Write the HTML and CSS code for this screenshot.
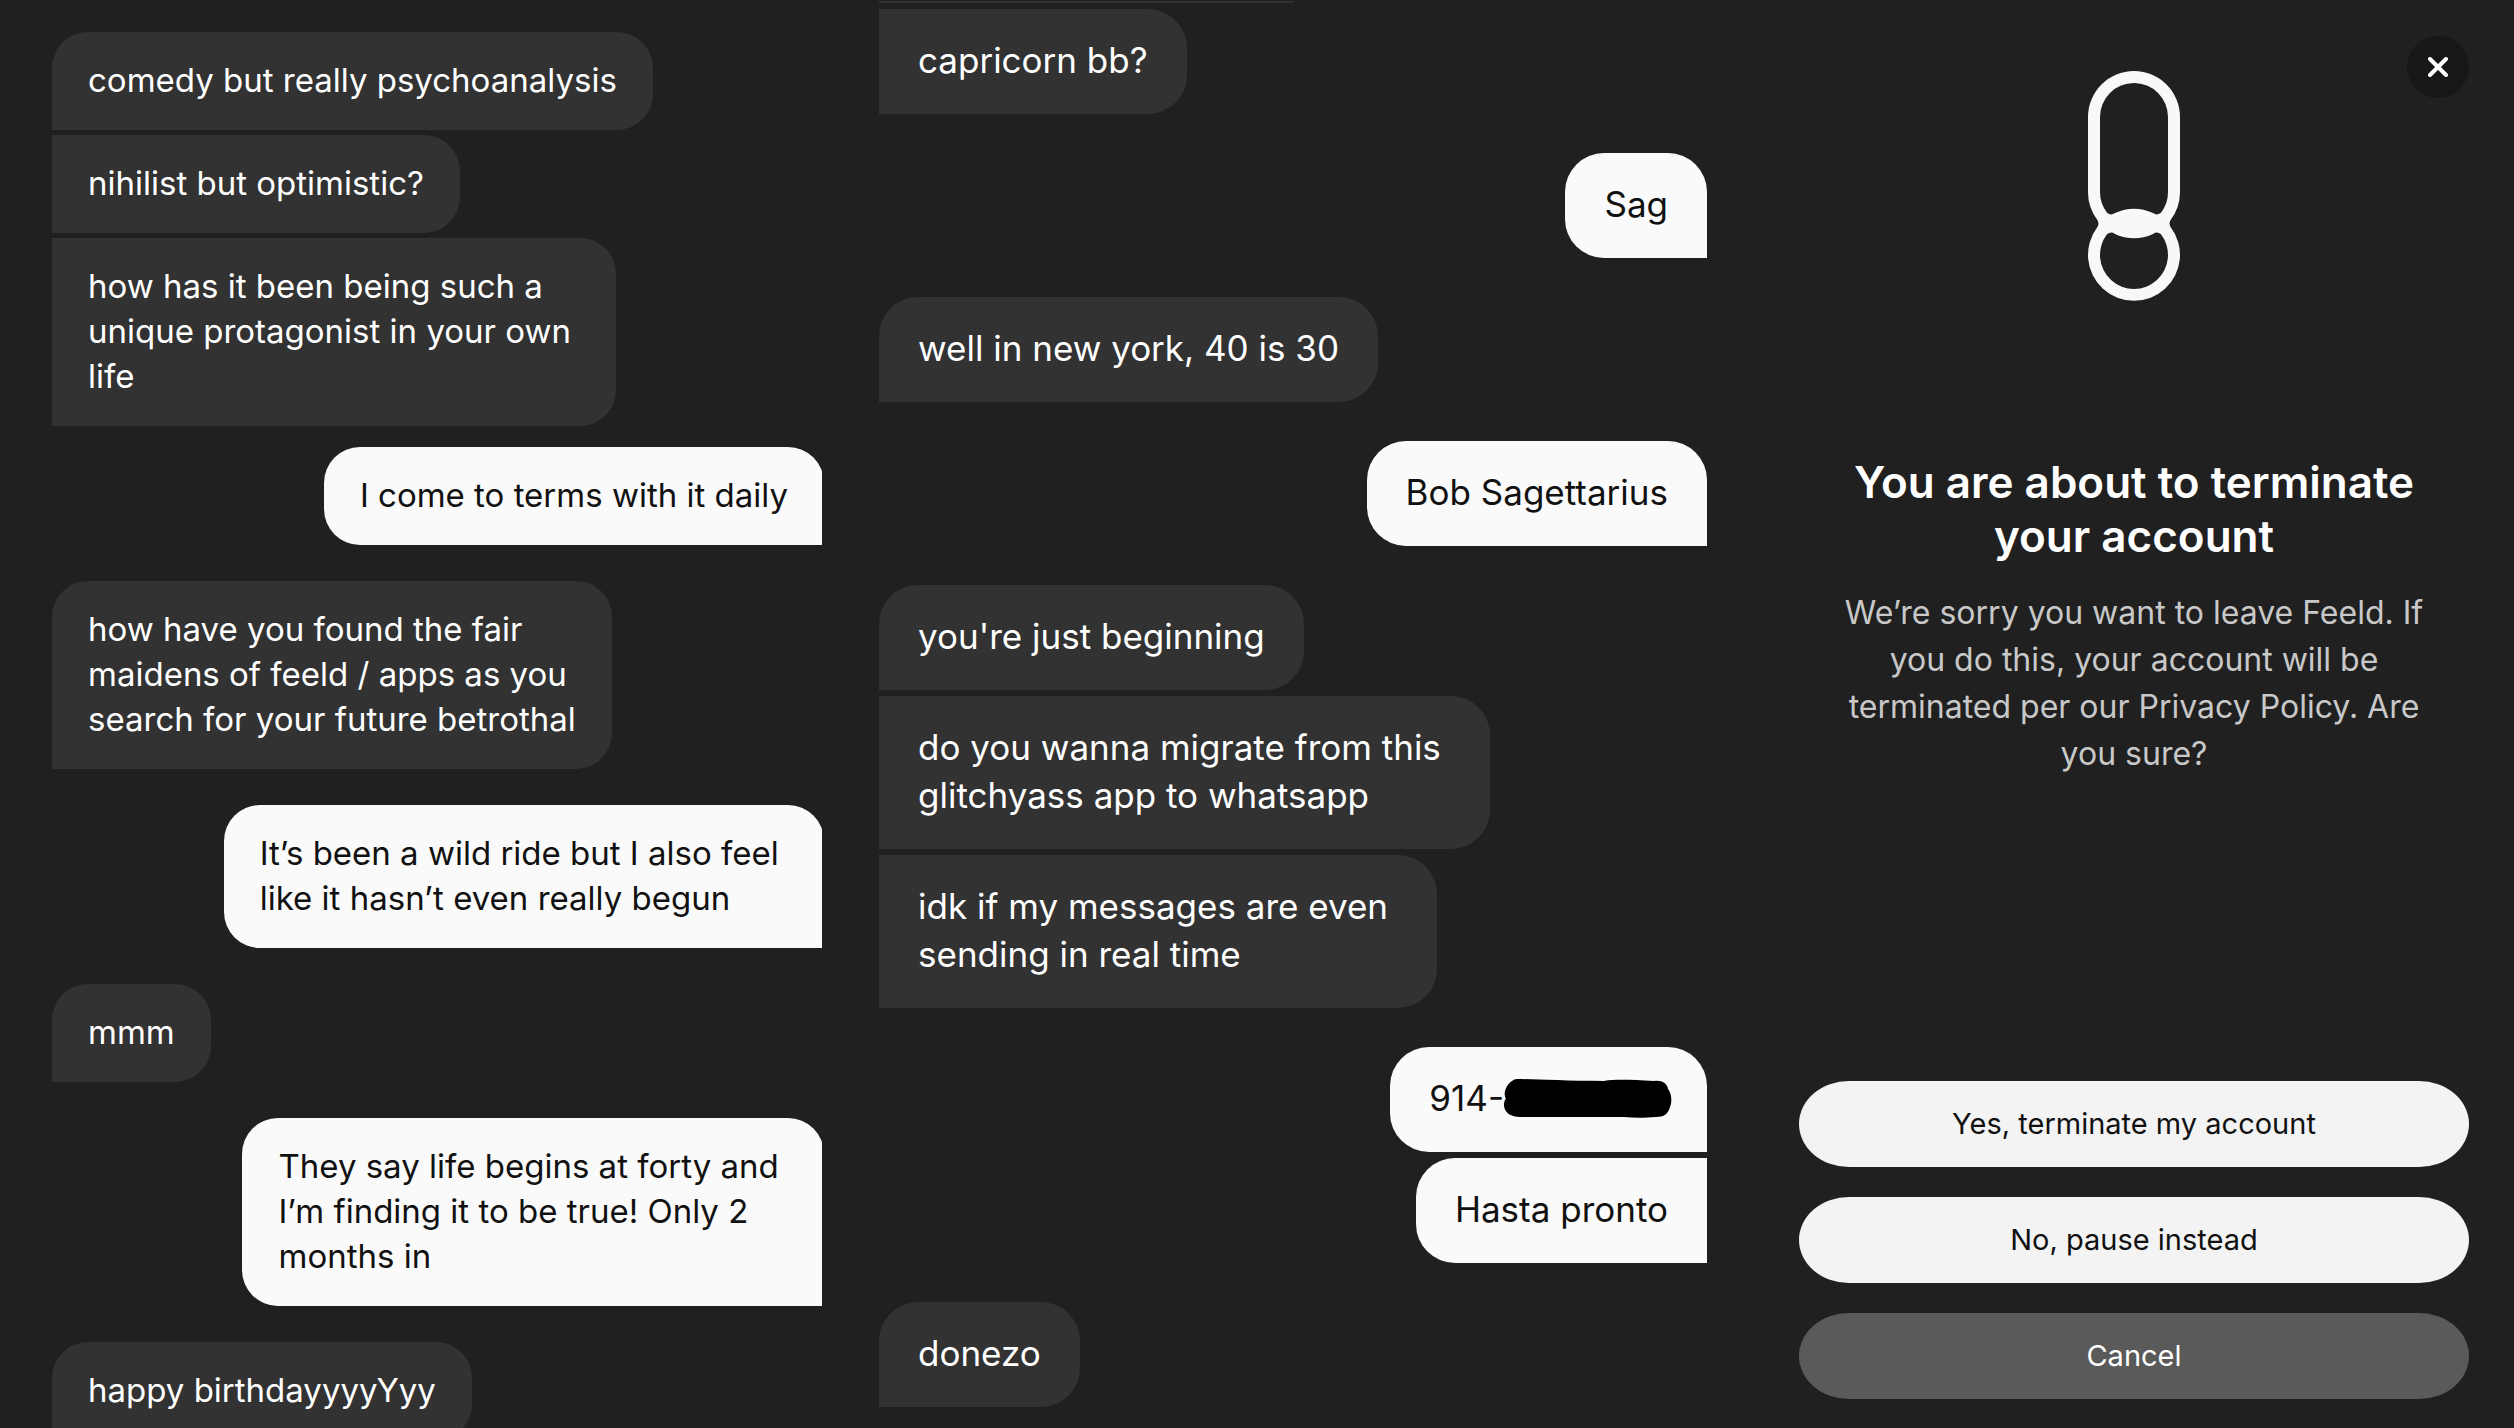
FILE: index.html
```html
<!DOCTYPE html>
<html lang="en">
<head>
<meta charset="utf-8">
<title>Feeld</title>
<link rel="stylesheet" href="styles.css">
</head>
<body>
<main class="board">
  <section class="panel panel-first" aria-label="First conversation">
    <ol class="thread thread-small">
      <li class="bubble in">comedy but really psychoanalysis</li>
      <li class="bubble in joined">nihilist but optimistic?</li>
      <li class="bubble in joined">how has it been being such a 
unique protagonist in your own 
life</li>
      <li class="bubble out close-up">I come to terms with it daily</li>
      <li class="bubble in">how have you found the fair 
maidens of feeld / apps as you 
search for your future betrothal</li>
      <li class="bubble out">It’s been a wild ride but I also feel 
like it hasn’t even really begun</li>
      <li class="bubble in">mmm</li>
      <li class="bubble out">They say life begins at forty and 
I’m finding it to be true! Only 2 
months in</li>
      <li class="bubble in">happy birthdayyyyYyy</li>
    </ol>
  </section>

  <section class="panel panel-second" aria-label="Second conversation">
    <ol class="thread thread-large">
      <li class="bubble in cut-off" aria-hidden="true"></li>
      <li class="bubble in joined">capricorn bb?</li>
      <li class="bubble out">Sag</li>
      <li class="bubble in">well in new york, 40 is 30</li>
      <li class="bubble out">Bob Sagettarius</li>
      <li class="bubble in">you're just beginning</li>
      <li class="bubble in joined">do you wanna migrate from this 
glitchyass app to whatsapp</li>
      <li class="bubble in joined">idk if my messages are even 
sending in real time</li>
      <li class="bubble out phone">914-<svg class="redaction" viewBox="0 0 168 39" role="img" aria-label="redacted"><path d="M13 0C30 0 60 2 100 2C112 0 128 1 150 2C158 1 163 4 164 10C168 15 168 23 166 28C164 35 160 38 152 38C140 39 130 39 120 38H16C6 38 0 33 0 26Q0 21 2 20Q0 17 1 12Q3 5 8 2Q10 0 13 0Z"/></svg></li>
      <li class="bubble out joined">Hasta pronto</li>
      <li class="bubble in">donezo</li>
    </ol>
  </section>

  <section class="panel dialog" role="dialog" aria-labelledby="dialog-title">
    <button class="close" type="button" aria-label="Close">
      <svg viewBox="0 0 20 20" width="20" height="20"><path d="M2 2L18 18M18 2L2 18"/></svg>
    </button>
    <svg class="logo" viewBox="0 0 92 230" aria-hidden="true">
      <path fill-rule="evenodd" d="M46 0A46 46 0 0 1 92 46V121A46 46 0 0 1 82.6 149Q80.5 152.5 82.6 156A46 46 0 1 1 9.4 156Q11.5 152.5 9.4 149A46 46 0 0 1 0 121V46A46 46 0 0 1 46 0ZM12 46A34 34 0 0 1 80 46V121A34 34 0 0 1 73 141.7Q69 145 65 142.1A46 46 0 0 0 27 142.1Q23 145 19 141.7A34 34 0 0 1 12 121ZM19 163.3Q23 160 27 162.9A46 46 0 0 0 65 162.9Q69 160 73 163.3A34 34 0 1 1 19 163.3Z"/>
    </svg>
    <h1 class="title" id="dialog-title">You are about to terminate your account</h1>
    <p class="text">We’re sorry you want to leave Feeld. If you do this, your account will be terminated per our Privacy Policy. Are you sure?</p>
    <div class="actions">
      <button class="action" type="button">Yes, terminate my account</button>
      <button class="action" type="button">No, pause instead</button>
      <button class="action action-quiet" type="button">Cancel</button>
    </div>
  </section>
</main>
</body>
</html>
```
FILE: styles.css
```css
* {
  box-sizing: border-box;
}

body {
  margin: 0;
  background: #202020;
  color: #fff;
  font-family: Inter, "Liberation Sans", sans-serif;
}

.board {
  display: grid;
  grid-template-columns: 850fr 880fr 784fr;
  height: 100vh;
  overflow: hidden;
}

.panel {
  min-width: 0;
  min-height: 0;
}

.panel-first {
  padding: 32px 28px 0 52px;
}

.panel-second {
  padding: 0 23px 0 29px;
}

/* Conversations */

.thread {
  display: flex;
  flex-direction: column;
  margin: 0;
  padding: 0;
  list-style: none;
}

.thread-small {
  --gap: 36px;
  --joined-gap: 5px;
  --radius: 36px;
  overflow: hidden;
  font-size: 33px;
  line-height: 45px;
}

.thread-large {
  --gap: 39px;
  --joined-gap: 6px;
  --radius: 39px;
  font-size: 35px;
  line-height: 48px;
}

.bubble {
  flex: none;
  max-width: 100%;
  margin-top: var(--gap);
  border-radius: var(--radius);
  white-space: break-spaces;
}

.bubble:first-child {
  margin-top: 0;
}

.thread-small .bubble {
  padding: 26px 36px 27px;
}

.thread-large .bubble {
  padding: 27px 39px 30px;
}

.in {
  align-self: flex-start;
  background: #323232;
  border-bottom-left-radius: 0;
}

.out {
  align-self: flex-end;
  background: #fafafa;
  border-bottom-right-radius: 0;
  color: #111;
}

.bubble.joined {
  margin-top: var(--joined-gap);
}

.in.joined {
  border-top-left-radius: 0;
}

.out.joined {
  border-top-right-radius: 0;
}

.bubble.close-up {
  margin-top: 21px;
}

/* Sent bubbles run slightly past the edge of the first thread */
.thread-small .out {
  margin-right: -2px;
}

.thread-large .cut-off {
  width: 416px;
  height: 3px;
  padding: 0;
  border-top: 1px solid #202020;
  border-radius: 0 0 12px 0;
}

.phone {
  display: flex;
  align-items: center;
}

.redaction {
  width: 168px;
  height: 39px;
  margin-right: -4px;
  fill: #000;
}

/* Account dialog */

.dialog {
  position: relative;
  display: flex;
  flex-direction: column;
  align-items: center;
  padding: 71px 45px 29px 69px;
  text-align: center;
}

.close {
  position: absolute;
  top: 36px;
  right: 45px;
  display: grid;
  place-items: center;
  width: 62px;
  height: 62px;
  padding: 0;
  border: 0;
  border-radius: 50%;
  background: #171717;
}

.close path {
  stroke: #fff;
  stroke-width: 4;
  stroke-linecap: round;
}

.logo {
  width: 92px;
  height: 230px;
  fill: #f8f8f8;
}

.title {
  max-width: 600px;
  margin: 154px 0 0;
  font-size: 44px;
  font-weight: 600;
  line-height: 54px;
}

.text {
  max-width: 600px;
  margin: 26px 0 0;
  color: #c8c8c8;
  font-size: 32px;
  line-height: 47px;
}

.actions {
  display: flex;
  flex-direction: column;
  gap: 30px;
  width: 100%;
  margin-top: auto;
}

.action {
  height: 86px;
  padding: 0 24px 2px;
  border: 0;
  border-radius: 50px / 43px;
  background: #f3f3f3;
  color: #111;
  font: inherit;
  font-size: 29px;
}

.action-quiet {
  background: #5a5a5a;
  color: #fff;
}
```
